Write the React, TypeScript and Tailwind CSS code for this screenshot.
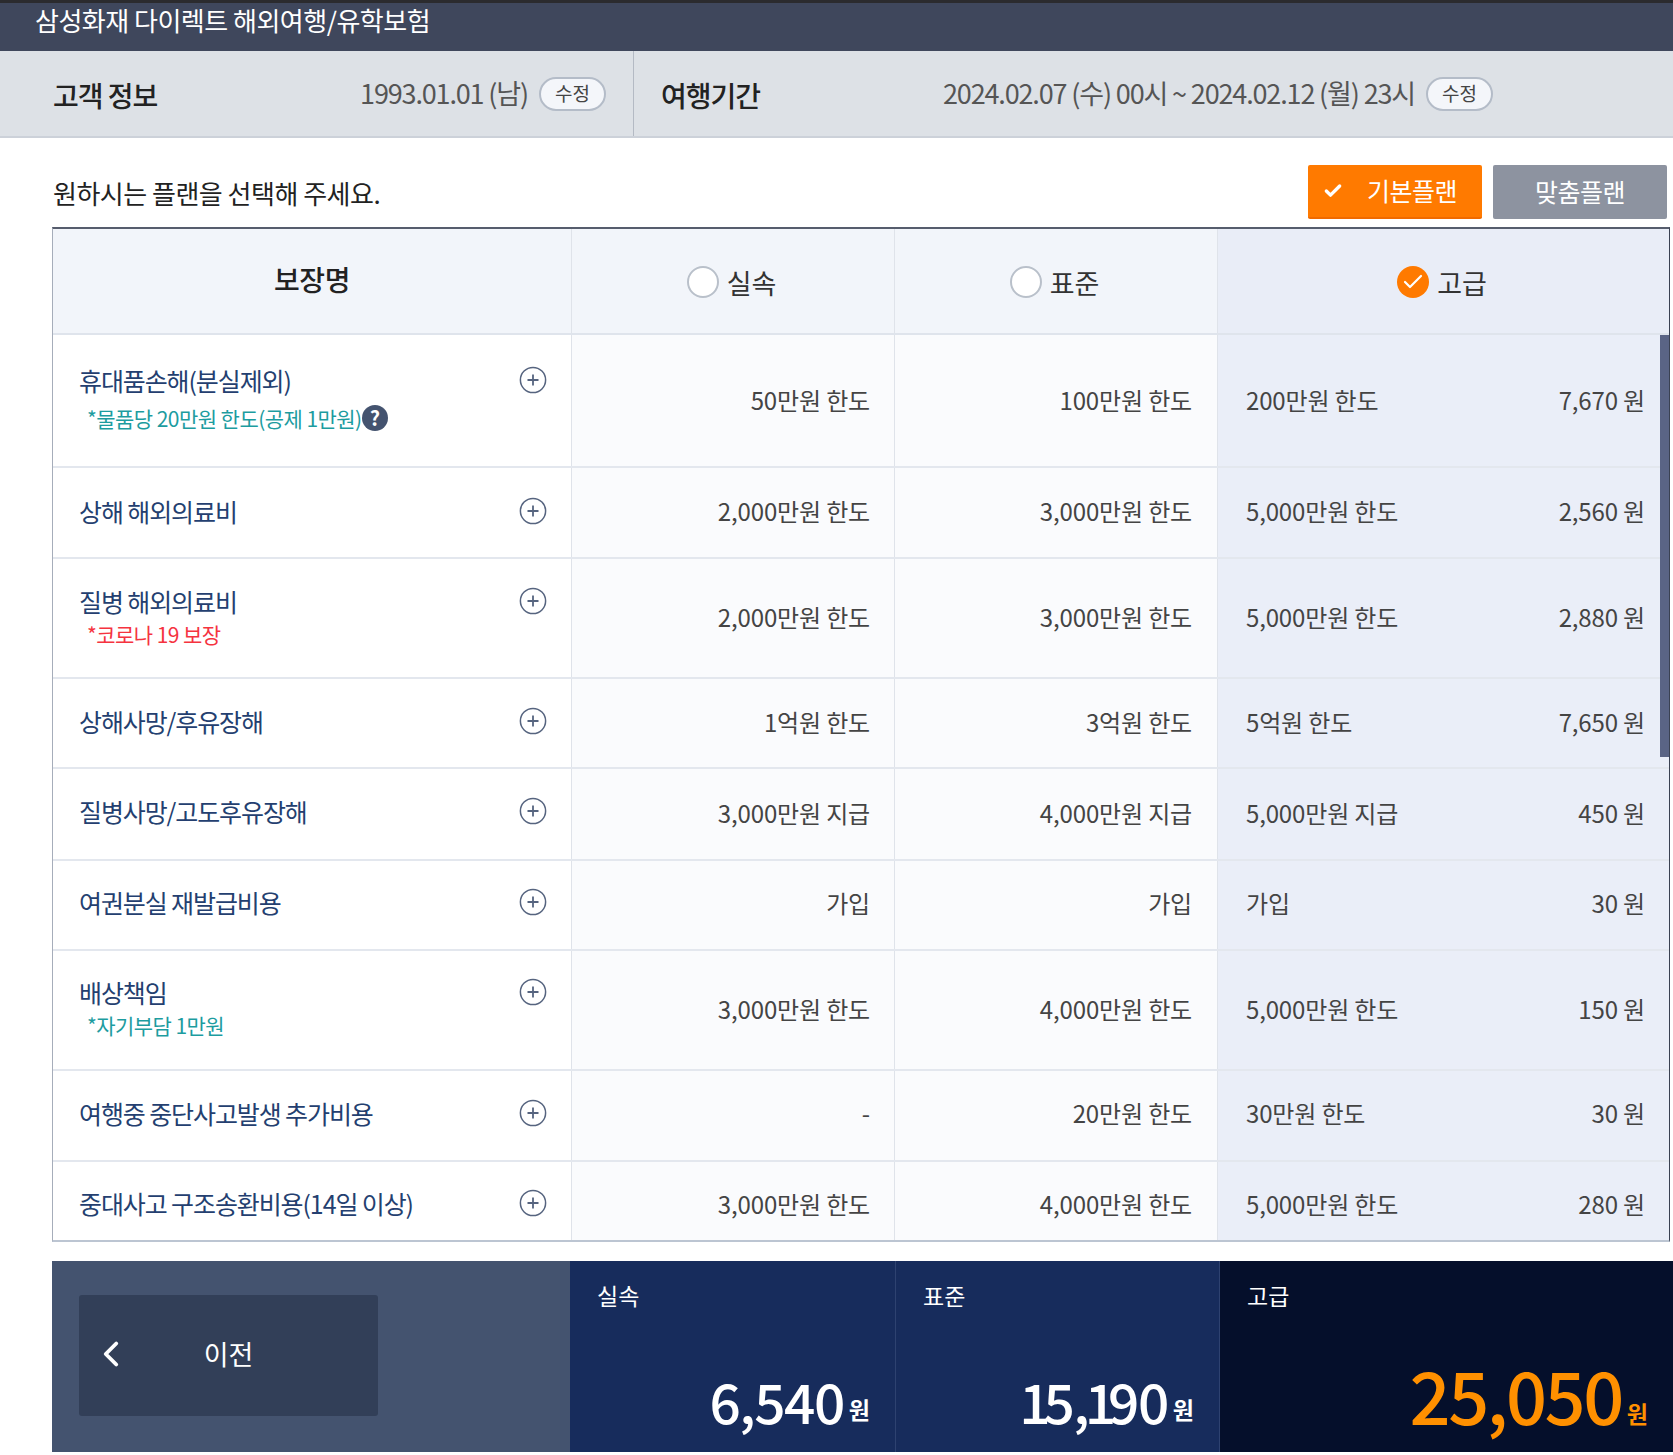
import { Check, ChevronLeft } from "lucide-react";

type Row = {
  name: string;
  sub?: string;
  subColor?: string;
  help?: boolean;
  h: string;
  top: string;
  vb: string;
  a: string;
  b: string;
  c: string;
  price: string;
};

const rows: Row[] = [
  { name: "휴대품손해(분실제외)", sub: "*물품당 20만원 한도(공제 1만원)", subColor: "text-[#1d9c9f]", help: true, h: "h-[133px]", top: "pt-[28px]", vb: "pb-[1px]", a: "50만원 한도", b: "100만원 한도", c: "200만원 한도", price: "7,670 원" },
  { name: "상해 해외의료비", h: "h-[91px]", top: "pt-[26px]", vb: "pb-[4px]", a: "2,000만원 한도", b: "3,000만원 한도", c: "5,000만원 한도", price: "2,560 원" },
  { name: "질병 해외의료비", sub: "*코로나 19 보장", subColor: "text-[#f5333f]", h: "h-[120px]", top: "pt-[25px]", vb: "pb-[2px]", a: "2,000만원 한도", b: "3,000만원 한도", c: "5,000만원 한도", price: "2,880 원" },
  { name: "상해사망/후유장해", h: "h-[90px]", top: "pt-[25px]", vb: "pb-[2px]", a: "1억원 한도", b: "3억원 한도", c: "5억원 한도", price: "7,650 원" },
  { name: "질병사망/고도후유장해", h: "h-[92px]", top: "pt-[25px]", vb: "pb-[2px]", a: "3,000만원 지급", b: "4,000만원 지급", c: "5,000만원 지급", price: "450 원" },
  { name: "여권분실 재발급비용", h: "h-[90px]", top: "pt-[24px]", vb: "pb-[4px]", a: "가입", b: "가입", c: "가입", price: "30 원" },
  { name: "배상책임", sub: "*자기부담 1만원", subColor: "text-[#1d9c9f]", h: "h-[120px]", top: "pt-[24px]", vb: "pb-[2px]", a: "3,000만원 한도", b: "4,000만원 한도", c: "5,000만원 한도", price: "150 원" },
  { name: "여행중 중단사고발생 추가비용", h: "h-[91px]", top: "pt-[25px]", vb: "pb-[5px]", a: "-", b: "20만원 한도", c: "30만원 한도", price: "30 원" },
  { name: "중대사고 구조송환비용(14일 이상)", h: "h-[91px]", top: "pt-[24px]", vb: "pb-[6px]", a: "3,000만원 한도", b: "4,000만원 한도", c: "5,000만원 한도", price: "280 원" },
];

const PlusIcon = () => (
  <svg width="28" height="28" viewBox="0 0 28 28" fill="none" stroke="#56647f" className="shrink-0">
    <circle cx="14" cy="14" r="12.6" strokeWidth="1.5" />
    <path d="M14 8.5v11M8.5 14h11" strokeWidth="1.8" />
  </svg>
);

const EditPill = () => (
  <span className="flex h-[34px] w-[67px] items-center justify-center rounded-full border-2 border-[#b4bcc8] bg-[#f4f6fa] text-[19px] text-[#444]">
    수정
  </span>
);

const Radio = ({ label, checked }: { label: string; checked?: boolean }) => (
  <div className="flex items-center gap-[8px] pt-[2px]">
    {checked ? (
      <span className="flex h-[32px] w-[32px] items-center justify-center rounded-full bg-[#ff7a00]">
        <Check size={24} color="#fff" strokeWidth={2.2} />
      </span>
    ) : (
      <span className="h-[32px] w-[32px] rounded-full border-2 border-[#b9c0ca] bg-white" />
    )}
    <span className="text-[27px] leading-none text-[#333]">{label}</span>
  </div>
);

// the digit 1 sits much tighter than the others in the reference
const PriceChars = ({ price }: { price: string }) => (
  <>
    {price.split("").map((ch, i) => {
      if (ch === "1") {
        return (
          <span key={i} className={i === 0 ? "tracking-[-7px]" : "tracking-[-8px]"}>
            {ch}
          </span>
        );
      }
      if (ch === "," && price[i + 1] === "1") {
        return (
          <span key={i} className="tracking-[-5px]">
            {ch}
          </span>
        );
      }
      return ch;
    })}
  </>
);

const Total = ({ label, price, hi, w }: { label: string; price: string; hi?: boolean; w?: string }) => (
  <div className={`flex flex-col justify-between pl-[27px] pt-[18px] ${hi ? "flex-1 bg-[#050f2b] pb-[16px] pr-[25px]" : `${w} border-r border-[#2e4270] bg-[#172c5c] pb-[20px] pr-[25px]`}`}>
    <span className="text-[23px] leading-[32px] text-white">{label}</span>
    <div className="flex items-baseline justify-end gap-[5px]">
      <span className={`font-medium [font-feature-settings:'palt'] ${hi ? "text-[72px] leading-[84px] tracking-[-2.4px] text-[#ff9000]" : "text-[55px] leading-[64px] tracking-[-1.5px] text-white"}`}>
        <PriceChars price={price} />
      </span>
      <span className={`text-[23px] font-bold ${hi ? "-translate-y-[2px] text-[#ff9000]" : "-translate-y-[5px] text-white"}`}>원</span>
    </div>
  </div>
);

export default function App() {
  return (
    <div className="h-[1455px] w-[1673px] overflow-hidden bg-white font-['Noto_Sans_CJK_KR','Noto_Sans',sans-serif]">
      <div className="h-[51px] border-t-[3px] border-[#2b2b2e] bg-[#3f475c] pl-[35px] text-[26px] leading-[34px] tracking-[-0.5px] text-white">
        삼성화재 다이렉트 해외여행/유학보험
      </div>

      <div className="flex h-[87px] border-b-2 border-[#ccd1d9] bg-[#dde1e6]">
        <div className="flex w-[634px] items-center border-r border-[#b4bac4] pl-[53px] pr-[27px]">
          <span className="pt-[2px] text-[28px] font-medium tracking-[-1px] text-[#222]">고객 정보</span>
          <span className="ml-auto mr-[11px] text-[27px] tracking-[-1.15px] text-[#555]">1993.01.01 (남)</span>
          <EditPill />
        </div>
        <div className="flex flex-1 items-center pl-[27px]">
          <span className="w-[282px] pt-[2px] text-[28px] font-medium tracking-[-1px] text-[#222]">여행기간</span>
          <span className="mr-[11px] text-[27px] tracking-[-1.15px] text-[#555]">2024.02.07 (수) 00시 ~ 2024.02.12 (월) 23시</span>
          <EditPill />
        </div>
      </div>

      <div className="flex h-[89px] items-start pl-[53px] pr-[6px] pt-[27px]">
        <span className="pt-[8px] text-[26px] leading-[40px] tracking-[-0.5px] text-[#222]">원하시는 플랜을 선택해 주세요.</span>
        <button className="ml-auto flex h-[54px] w-[174px] items-center rounded-[2px] border-b-2 border-[#f06a00] bg-[#ff7a00] pl-[15px] text-[25px] tracking-[-0.5px] text-white">
          <Check size={20} strokeWidth={4} />
          <span className="ml-[24px]">기본플랜</span>
        </button>
        <button className="ml-[11px] h-[54px] w-[174px] rounded-[2px] bg-[#8d93a0] text-[25px] tracking-[-0.5px] text-white">맞춤플랜</button>
      </div>

      <div className="ml-[52px] mr-[3px] h-[1015px] overflow-hidden border-x border-b-2 border-t-2 border-b-[#bcc5d2] border-l-[#a6adba] border-r-[#3a4152] border-t-[#565d6d]">
        <div className="flex h-[106px] border-b-2 border-[#dfe4ec] bg-[#f2f5fa]">
          <div className="flex w-[519px] justify-center border-r border-[#dfe3ea] pt-[30px] text-[28px] leading-[40px] font-medium tracking-[-0.5px] text-[#222]">보장명</div>
          <div className="flex w-[323px] items-center justify-center border-r border-[#dfe3ea] pr-[3px]"><Radio label="실속" /></div>
          <div className="flex w-[323px] items-center justify-center border-r border-[#dfe3ea] pr-[3px]"><Radio label="표준" /></div>
          <div className="flex flex-1 items-center justify-center bg-[#e9edf7] pr-[3px]"><Radio label="고급" checked /></div>
        </div>

        <div className="relative">
          {rows.map((r) => (
            <div key={r.name} className={`flex border-b-2 border-[#e3e7ee] text-[24px] tracking-[-0.15px] text-[#444] ${r.h}`}>
              <div className={`w-[519px] border-r border-[#dfe3ea] bg-white pl-[26px] pr-[24px] ${r.top}`}>
                <div className="flex items-center justify-between">
                  <span className="text-[25px] leading-[34px] tracking-[-1.1px] text-[#243f70]">{r.name}</span>
                  <PlusIcon />
                </div>
                {r.sub && (
                  <div className={`flex items-center pl-[8px] text-[21px] leading-[30px] tracking-[-0.55px] ${r.help ? "mt-[6px]" : "mt-[1px]"}`}>
                    <span className={r.subColor}>{r.sub}</span>
                    {r.help && (
                      <span className="flex h-[26px] w-[26px] items-center justify-center rounded-full bg-[#44536f] text-[20px] font-bold text-white">?</span>
                    )}
                  </div>
                )}
              </div>
              <div className={`flex w-[323px] items-center justify-end border-r border-[#dfe3ea] bg-[#fafbfd] pr-[24px] ${r.vb}`}>{r.a}</div>
              <div className={`flex w-[323px] items-center justify-end border-r border-[#dfe3ea] bg-[#fafbfd] pr-[25px] ${r.vb}`}>{r.b}</div>
              <div className={`flex flex-1 items-center justify-between bg-[#eaeef8] pl-[28px] pr-[24px] ${r.vb}`}>
                <span>{r.c}</span>
                <span>{r.price}</span>
              </div>
            </div>
          ))}
          <div className="absolute right-0 top-0 h-[422px] w-[9px] bg-[#5a6485]" />
        </div>
      </div>

      <div className="ml-[52px] mt-[19px] flex h-[191px]">
        <div className="flex w-[518px] items-center bg-[#44536f] pb-[3px] pl-[27px]">
          <button className="relative flex h-[121px] w-[299px] items-center justify-center rounded-[3px] bg-[#323f58] pb-[2px] text-[27px] text-white">
            <ChevronLeft size={42} strokeWidth={2.2} className="absolute left-[11px]" />
            이전
          </button>
        </div>
        <Total label="실속" price="6,540" w="w-[326px]" />
        <Total label="표준" price="15,190" w="w-[324px]" />
        <Total label="고급" price="25,050" hi />
      </div>
    </div>
  );
}
